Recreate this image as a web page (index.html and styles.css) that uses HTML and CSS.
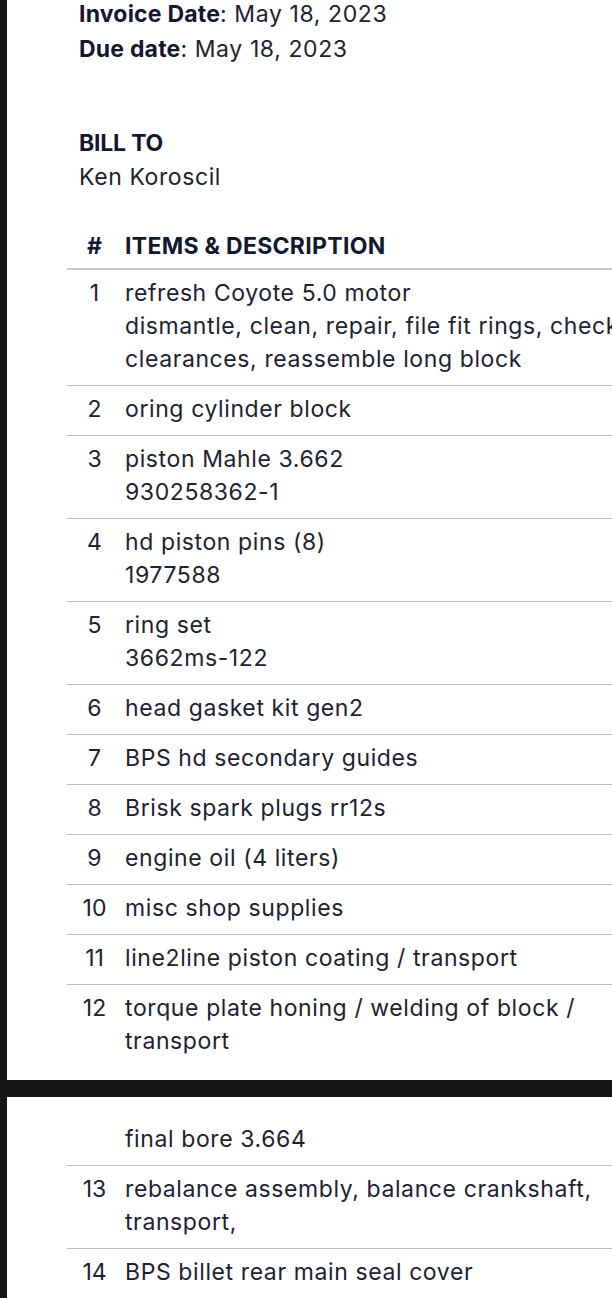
FILE: index.html
```html
<!DOCTYPE html>
<html lang="en">
<head>
    <meta charset="UTF-8">
    <meta name="viewport" content="width=device-width, initial-scale=1.0">
    <title>Invoice</title>
    <link rel="stylesheet" href="styles.css">
</head>
<body>
    <div class="sheet sheet-top">
        <div class="dates">
            <div><strong>Invoice Date</strong>: May 18, 2023</div>
            <div><strong>Due date</strong>: May 18, 2023</div>
        </div>

        <div class="bill-to">
            <h2>BILL TO</h2>
            <div>Ken Koroscil</div>
        </div>

        <div class="items">
            <div class="row head">
                <div class="num">#</div>
                <div class="desc">ITEMS &amp; DESCRIPTION</div>
            </div>
            <div class="row">
                <div class="num">1</div>
                <div class="desc">refresh Coyote 5.0 motor<br>dismantle, clean, repair, file fit rings, check clearances, reassemble long block</div>
            </div>
            <div class="row">
                <div class="num">2</div>
                <div class="desc">oring cylinder block</div>
            </div>
            <div class="row">
                <div class="num">3</div>
                <div class="desc">piston Mahle 3.662<br>930258362-1</div>
            </div>
            <div class="row">
                <div class="num">4</div>
                <div class="desc">hd piston pins (8)<br>1977588</div>
            </div>
            <div class="row">
                <div class="num">5</div>
                <div class="desc">ring set<br>3662ms-122</div>
            </div>
            <div class="row">
                <div class="num">6</div>
                <div class="desc">head gasket kit gen2</div>
            </div>
            <div class="row">
                <div class="num">7</div>
                <div class="desc">BPS hd secondary guides</div>
            </div>
            <div class="row">
                <div class="num">8</div>
                <div class="desc">Brisk spark plugs rr12s</div>
            </div>
            <div class="row">
                <div class="num">9</div>
                <div class="desc">engine oil (4 liters)</div>
            </div>
            <div class="row">
                <div class="num">10</div>
                <div class="desc">misc shop supplies</div>
            </div>
            <div class="row">
                <div class="num">11</div>
                <div class="desc">line2line piston coating / transport</div>
            </div>
            <div class="row last">
                <div class="num">12</div>
                <div class="desc">torque plate honing / welding of block / transport</div>
            </div>
        </div>
    </div>

    <div class="sheet sheet-bottom">
        <div class="items">
            <div class="row">
                <div class="num"></div>
                <div class="desc">final bore 3.664</div>
            </div>
            <div class="row">
                <div class="num">13</div>
                <div class="desc">rebalance assembly, balance crankshaft, transport,</div>
            </div>
            <div class="row last">
                <div class="num">14</div>
                <div class="desc">BPS billet rear main seal cover</div>
            </div>
        </div>
    </div>
</body>
</html>
```

FILE: styles.css
```css
html, body {
    margin: 0;
    padding: 0;
}
body {
    font-family: Inter, "Liberation Sans", Arial, sans-serif;
    font-size: 23px;
    letter-spacing: 0.6px;
    background-color: #161616;
    color: #1d2232;
    overflow: hidden;
}
.sheet {
    display: flow-root;
    margin-left: 7px;
    width: 700px;
    background-color: #fff;
    padding-left: 72px;
    box-sizing: border-box;
}
.sheet-top {
    height: 1080px;
}
.sheet-bottom {
    margin-top: 17px;
    height: 220px;
    padding-top: 19px;
}
strong, h2 {
    font-weight: 700;
    color: #121830;
    letter-spacing: 0.2px;
}
.dates {
    margin-top: -3px;
    line-height: 35px;
}
.bill-to {
    margin-top: 59px;
    line-height: 34px;
}
.bill-to h2 {
    margin: 0;
    font-size: 23px;
    letter-spacing: -0.2px;
}
.items {
    margin-left: -12px;
    margin-top: 28px;
}
.sheet-bottom .items {
    margin-top: 0;
}
.row {
    display: grid;
    grid-template-columns: 55px 510px;
    column-gap: 3px;
    line-height: 33px;
    padding: 7px 0 9px;
    border-bottom: 1px solid #bdbdbd;
}
.row.last {
    border-bottom: none;
}
.row.head {
    padding: 8px 0 5px;
    border-bottom: 2px solid #c9c9c9;
    font-weight: 700;
    color: #121830;
    letter-spacing: 0.3px;
}
.num {
    text-align: center;
    letter-spacing: 0;
}
```
